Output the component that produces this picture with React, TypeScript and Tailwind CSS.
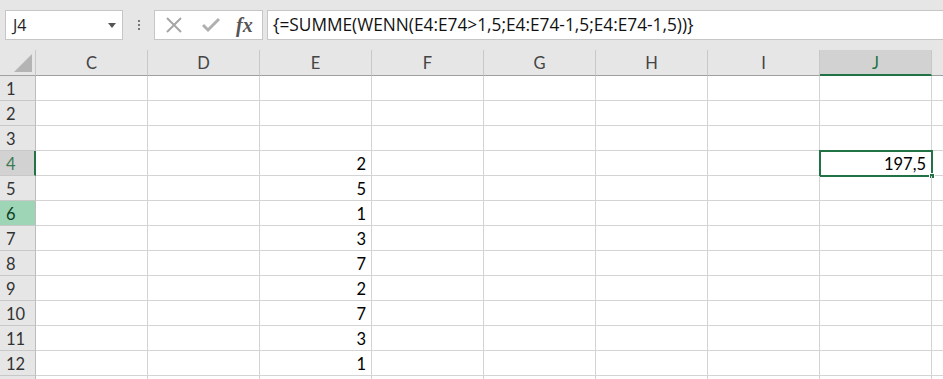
import { ReactNode } from "react";

const cols = ["C", "D", "E", "F", "G", "H", "I", "J"];
const values: Record<number, string> = { 4: "2", 5: "5", 6: "1", 7: "3", 8: "7", 9: "2", 10: "7", 11: "3", 12: "1" };
const rows = [1, 2, 3, 4, 5, 6, 7, 8, 9, 10, 11, 12, 13];

function HeaderCell({ label }: { label: string }) {
  const active = label === "J";
  return (
    <div
      className={`h-[26px] flex items-center justify-center pt-[2px] border-r border-[#c8c8c8] ${
        active
          ? "bg-[#d2d2d2] text-[#217346] border-b-2 border-b-[#217346]"
          : "bg-[#e6e6e6] text-[#444] border-b border-b-[#a0a0a0]"
      }`}
    >
      {label}
    </div>
  );
}

function RowHeader({ n }: { n: number }) {
  let cls = "bg-[#e6e6e6] text-[#333] border-r border-r-[#bdbdbd]";
  if (n === 4) cls = "bg-[#d2d2d2] text-[#3e7a52] border-r-2 border-r-[#217346]";
  if (n === 6) cls = "bg-[#9fd5b7] text-[#0f3d22] border-r border-r-[#bdbdbd]";
  return (
    <div className={`h-[25px] flex items-center pl-[6px] pt-[3px] border-b border-b-[#c8c8c8] ${cls}`}>
      {n < 13 ? n : null}
    </div>
  );
}

function Cell({ children, selected }: { children?: ReactNode; selected?: boolean }) {
  return (
    <div className="relative h-[25px] flex items-center justify-end pr-[5px] pt-[3px] border-r border-b border-[#d4d4d4] text-black">
      {children}
      {selected && (
        <div className="absolute -left-px -top-px w-[114px] h-[27px] border-2 border-[#217346]">
          <div className="absolute -right-[4px] -bottom-[4px] w-[6px] h-[6px] bg-[#217346] border border-white" />
        </div>
      )}
    </div>
  );
}

export default function App() {
  return (
    <div className="w-[943px] h-[379px] overflow-hidden bg-white" style={{ fontFamily: "Lato, 'Open Sans', sans-serif" }}>
      {/* formula bar */}
      <div className="h-[50px] bg-[#e6e6e6] flex items-start pt-[10px] pl-[5px]">
        <div className="w-[118px] h-[30px] bg-white border border-[#c6c6c6] flex items-center justify-between pl-[7px] pr-[6px] text-[16px] text-[#222]" style={{ fontFamily: "'Open Sans', sans-serif" }}>
          <span>J4</span>
          <svg width="8" height="5" viewBox="0 0 8 5"><path d="M0 0h8L4 5z" fill="#555" /></svg>
        </div>
        <div className="w-[31px] h-[30px] flex flex-col items-center justify-center gap-[2px]">
          <span className="w-[2px] h-[2px] bg-[#777]" />
          <span className="w-[2px] h-[2px] bg-[#777]" />
          <span className="w-[2px] h-[2px] bg-[#777]" />
        </div>
        <div className="w-[109px] h-[30px] bg-white border border-[#c6c6c6] flex items-center pl-[10px]">
          <svg width="18" height="18" viewBox="0 0 18 18" className="mr-[19px]">
            <path d="M2 2L16 16M16 2L2 16" stroke="#a6a6a6" strokeWidth="2" />
          </svg>
          <svg width="18" height="16" viewBox="0 0 18 16" className="mr-[16px]">
            <path d="M1 8L6 13L17 2" stroke="#b0b0b0" strokeWidth="3" fill="none" />
          </svg>
          <span className="italic font-bold text-[20px] text-[#555] leading-none" style={{ fontFamily: "'Liberation Serif', serif" }}>
            fx
          </span>
        </div>
        <div className="ml-[4px] flex-1 h-[30px] bg-white border border-[#c6c6c6] border-r-0 flex items-center pl-[5px] text-[17.3px] text-[#111]" style={{ fontFamily: "'Open Sans', sans-serif" }}>
          {"{=SUMME(WENN(E4:E74>1,5;E4:E74-1,5;E4:E74-1,5))}"}
        </div>
      </div>

      {/* grid */}
      <div className="grid grid-cols-[36px_repeat(8,112px)_1fr] text-[16.5px]">
        <div className="h-[26px] bg-[#e6e6e6] border-r border-b border-[#a0a0a0] border-r-[#c8c8c8] flex items-end justify-end pr-[3px] pb-[3px]">
          <svg width="18" height="18" viewBox="0 0 18 18"><path d="M18 0V18H0z" fill="#b4b4b4" /></svg>
        </div>
        {cols.map((c) => (
          <HeaderCell key={c} label={c} />
        ))}
        <div className="h-[26px] bg-[#e6e6e6] border-b border-b-[#a0a0a0]" />
        {rows.map((r) => (
          <div key={r} className="contents">
            <RowHeader n={r} />
            {cols.map((c) => (
              <Cell key={c} selected={c === "J" && r === 4}>
                {c === "E" ? values[r] : c === "J" && r === 4 ? "197,5" : null}
              </Cell>
            ))}
            <div className="h-[25px] border-b border-[#d4d4d4]" />
          </div>
        ))}
      </div>
    </div>
  );
}
